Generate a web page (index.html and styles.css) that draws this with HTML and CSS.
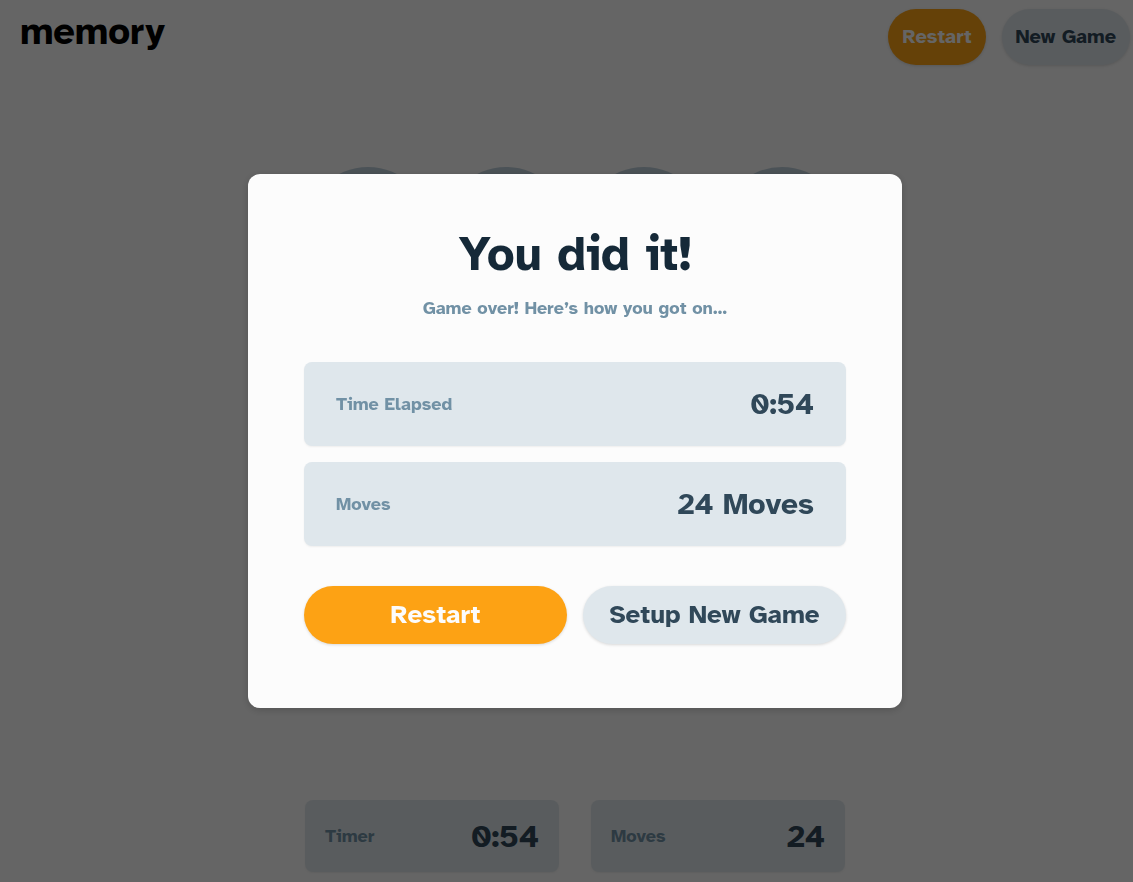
FILE: index.html
```html
<!DOCTYPE html>
<html lang="en">
<head>
<meta charset="utf-8">
<meta name="viewport" content="width=device-width, initial-scale=1">
<title>memory</title>
<link rel="stylesheet" href="styles.css">
</head>
<body>
<div class="page">
  <header class="header">
    <h1 class="logo">memory</h1>
    <nav class="header-actions">
      <button class="btn btn-primary" type="button">Restart</button>
      <button class="btn btn-secondary" type="button">New Game</button>
    </nav>
  </header>
  <main class="board">
    <span class="tile"></span><span class="tile"></span><span class="tile"></span><span class="tile"></span>
    <span class="tile"></span><span class="tile"></span><span class="tile"></span><span class="tile"></span>
    <span class="tile"></span><span class="tile"></span><span class="tile"></span><span class="tile"></span>
    <span class="tile"></span><span class="tile"></span><span class="tile"></span><span class="tile"></span>
  </main>
  <footer class="stats">
    <div class="stat"><span class="label">Timer</span><span class="stat-value">0:54</span></div>
    <div class="stat"><span class="label">Moves</span><span class="stat-value">24</span></div>
  </footer>
</div>
<div class="overlay">
  <section class="modal" role="dialog" aria-modal="true" aria-labelledby="result-title">
    <h2 class="title" id="result-title">You did it!</h2>
    <p class="subtitle">Game over! Here’s how you got on…</p>
    <div class="results">
      <div class="result"><span class="label">Time Elapsed</span><span class="result-value">0:54</span></div>
      <div class="result"><span class="label">Moves</span><span class="result-value">24 Moves</span></div>
    </div>
    <div class="modal-actions">
      <button class="btn btn-large btn-primary" type="button">Restart</button>
      <button class="btn btn-large btn-secondary" type="button">Setup New Game</button>
    </div>
  </section>
</div>
</body>
</html>
```
FILE: styles.css
```css
* {
  box-sizing: border-box;
  margin: 0;
}

body {
  background: #fcfcfc;
  font-family: "Atkinson Hyperlegible", "Liberation Sans", Arial, sans-serif;
  font-weight: 700;
}

.page {
  min-height: 100vh;
  padding: 9px 3px 8px 20px;
}

.header {
  display: flex;
  justify-content: space-between;
  align-items: flex-start;
}

.logo {
  color: #000;
  font-size: 38px;
  line-height: 46px;
}

.header-actions {
  display: flex;
  gap: 16px;
}

.btn {
  border: 0;
  border-radius: 32px;
  height: 56px;
  padding: 0 14px;
  font: inherit;
  font-size: 20px;
  line-height: 24px;
  box-shadow: 0 1px 3px rgba(0, 0, 0, 0.14);
  cursor: pointer;
}

.btn-primary {
  background: #fda214;
  color: #fcfcfc;
}

.btn-secondary {
  background: #dfe7ec;
  color: #304859;
}

.btn-large {
  flex: 1 1 0;
  height: 58px;
  padding: 0 8px;
  font-size: 26px;
}

.board {
  display: grid;
  grid-template-columns: repeat(4, 1fr);
  gap: 12px;
  max-width: 540px;
  margin: 102px auto 93px;
}

.tile {
  aspect-ratio: 1;
  border-radius: 50%;
  background: #bcced9;
}

.stats {
  display: flex;
  gap: 32px;
  max-width: 540px;
  margin: 0 auto;
}

.stat,
.result {
  display: flex;
  justify-content: space-between;
  align-items: center;
  border-radius: 8px;
  background: #dfe7ec;
  box-shadow: 0 1px 2px rgba(0, 0, 0, 0.06);
}

.stat {
  flex: 1;
  height: 72px;
  padding: 0 20px;
}

.result {
  height: 84px;
  padding: 0 32px;
}

.label {
  color: #7191a5;
  font-size: 18px;
}

.stat-value {
  color: #304859;
  font-size: 32px;
}

.result-value {
  color: #304859;
  font-size: 30px;
}

.overlay {
  position: fixed;
  inset: 0;
  display: flex;
  justify-content: center;
  align-items: center;
  padding: 0 3px 0 20px;
  background: rgba(0, 0, 0, 0.6);
}

.modal {
  width: 100%;
  max-width: 654px;
  padding: 52px 56px 64px;
  border-radius: 12px;
  background: #fcfcfc;
  box-shadow: 0 2px 8px rgba(0, 0, 0, 0.18);
  text-align: center;
}

.title {
  color: #152938;
  font-size: 48px;
  line-height: 56px;
}

.subtitle {
  margin: 14px 0 42px;
  color: #7191a5;
  font-size: 18px;
  line-height: 24px;
}

.results {
  display: grid;
  gap: 16px;
}

.modal-actions {
  display: flex;
  gap: 16px;
  margin-top: 40px;
}
```
